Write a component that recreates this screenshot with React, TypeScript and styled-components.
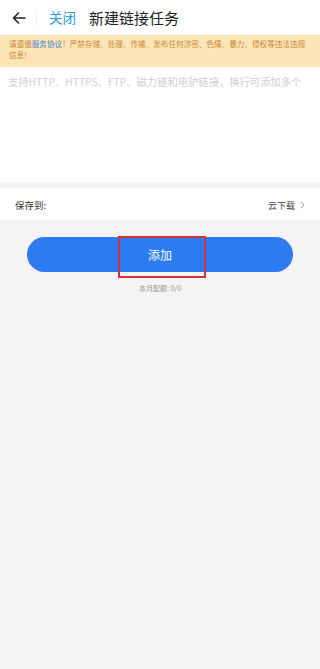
import React from "react";
import styled, { createGlobalStyle } from "styled-components";

const Global = createGlobalStyle`
  html, body { margin: 0; padding: 0; background: #f4f4f4; }
  body { font-family: "Noto Sans CJK SC", "Noto Sans", sans-serif; }
  * { box-sizing: border-box; }
`;

const Page = styled.div`
  width: 320px;
  min-height: 669px;
  background: #f4f4f4;
  display: flex;
  flex-direction: column;
`;

const Header = styled.div`
  height: 35px;
  background: #fff;
  display: flex;
  align-items: center;
  padding-left: 11px;
`;

const BackBtn = styled.div`
  width: 15px;
  height: 15px;
  display: flex;
  align-items: center;
  justify-content: center;
`;

const Divider = styled.div`
  width: 1px;
  height: 14px;
  background: #ececec;
  margin-left: 10px;
  margin-right: 12px;
`;

const CloseText = styled.span`
  font-size: 13.5px;
  color: #2b9ad9;
  line-height: 1;
`;

const Title = styled.span`
  margin-left: 13px;
  font-size: 15px;
  color: #222;
  line-height: 1;
`;

const Notice = styled.div`
  background: #fde5b6;
  height: 32px;
  padding: 4px 10px 0 9px;
  font-size: 7.6px;
  line-height: 10.5px;
  color: #c7893c;
`;

const Link = styled.span`
  color: #3f7fd6;
`;

const InputArea = styled.div`
  background: #fff;
  height: 115px;
  padding: 8px 8px;
  font-size: 10.3px;
  line-height: 14px;
  color: #cfcfcf;
  white-space: nowrap;
`;

const Gap = styled.div`
  height: 6px;
`;

const Row = styled.div`
  background: #fff;
  height: 32px;
  display: flex;
  align-items: center;
  justify-content: space-between;
  padding: 2px 15px 0 15px;
  font-size: 9.5px;
  color: #333;
`;

const RowRight = styled.div`
  display: flex;
  align-items: center;
  gap: 5px;
  font-size: 9px;
  color: #444;
`;

const ButtonWrap = styled.div`
  position: relative;
  margin: 17px 27px 0 27px;
`;

const AddButton = styled.div`
  height: 35px;
  border-radius: 18px;
  background: #2d7bf1;
  color: #fff;
  display: flex;
  align-items: center;
  justify-content: center;
  font-size: 12px;
`;

const Highlight = styled.div`
  position: absolute;
  left: 91px;
  top: -1px;
  width: 88px;
  height: 42px;
  border: 2px solid #d5313a;
  pointer-events: none;
`;

const Quota = styled.div`
  margin-top: 11px;
  text-align: center;
  font-size: 7px;
  color: #999;
`;

export default function App() {
  return (
    <Page>
      <Global />
      <Header>
        <BackBtn>
          <svg width="14" height="12" viewBox="0 0 14 12" fill="none">
            <path d="M13 6H1.5M6.5 1L1.5 6l5 5" stroke="#222" strokeWidth="1.6" strokeLinecap="round" strokeLinejoin="round" />
          </svg>
        </BackBtn>
        <Divider />
        <CloseText>关闭</CloseText>
        <Title>新建链接任务</Title>
      </Header>
      <Notice>
        请遵循<Link>服务协议</Link>！严禁存储、处理、传输、发布任何涉密、色情、暴力、侵权等违法违规信息!
      </Notice>
      <InputArea>支持HTTP、HTTPS、FTP、磁力链和电驴链接，换行可添加多个</InputArea>
      <Gap />
      <Row>
        <span>保存到:</span>
        <RowRight>
          <span>云下载</span>
          <svg width="5" height="8" viewBox="0 0 5 8" fill="none">
            <path d="M1 1l3 3-3 3" stroke="#999" strokeWidth="1" strokeLinecap="round" strokeLinejoin="round" />
          </svg>
        </RowRight>
      </Row>
      <ButtonWrap>
        <AddButton>添加</AddButton>
        <Highlight />
      </ButtonWrap>
      <Quota>本月配额: 0/0</Quota>
    </Page>
  );
}
